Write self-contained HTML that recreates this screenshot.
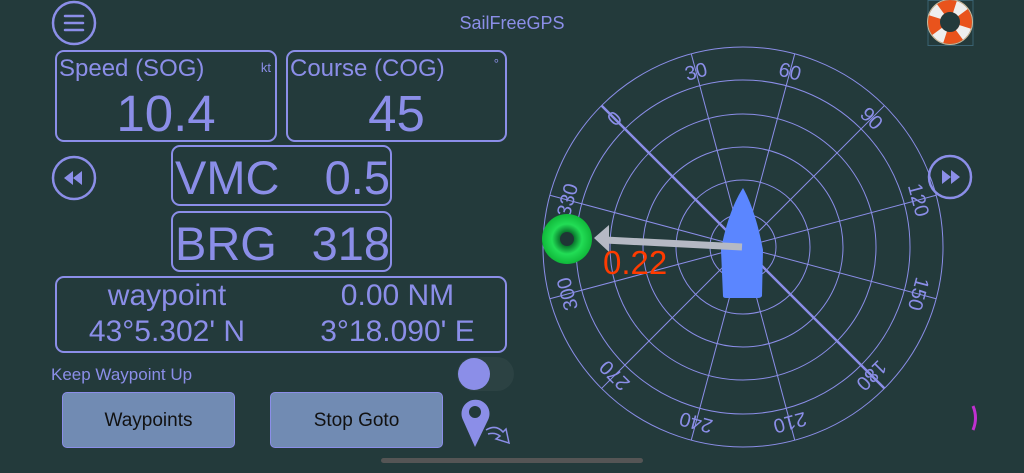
<!DOCTYPE html>
<html><head><meta charset="utf-8"><style>
*{margin:0;padding:0;box-sizing:border-box}
html,body{width:1024px;height:473px;overflow:hidden}
body{background:#233a3b;font-family:"Liberation Sans",sans-serif;color:#8b8ee8;position:relative}
svg{display:block}
.a{position:absolute}
.box{position:absolute;border:2px solid #8b8ee8;border-radius:9px;overflow:hidden}
.lbl{position:absolute;font-size:24px;left:2px;top:3px;white-space:nowrap}
.val{position:absolute;font-size:51px;width:100%;text-align:center;top:32px}
.big{position:absolute;font-size:47px;top:3px;white-space:nowrap}
.btn{position:absolute;background:#718bb3;border:1.5px solid #8b8ee8;border-radius:5px;color:#111;font-size:19px;text-align:center;line-height:55px}
.w{position:absolute;text-align:center;white-space:nowrap;line-height:34px}
</style></head><body>
<svg class="a" style="left:0;top:0" width="1024" height="473">
<circle cx="74" cy="23" r="21" fill="none" stroke="#8b8ee8" stroke-width="2.5"/>
<g stroke="#8b8ee8" stroke-width="2.5" stroke-linecap="round"><line x1="65" y1="16" x2="83" y2="16"/><line x1="65" y1="23" x2="83" y2="23"/><line x1="65" y1="30" x2="83" y2="30"/></g>
<circle cx="74" cy="178" r="21" fill="none" stroke="#8b8ee8" stroke-width="2.5"/>
<path d="M64 178 L73 171 L73 185Z M73 178 L82 171 L82 185Z" fill="#8b8ee8"/>
<circle cx="950" cy="177" r="21" fill="none" stroke="#8b8ee8" stroke-width="2.5"/>
<path d="M960 177 L951 170 L951 184Z M951 177 L942 170 L942 184Z" fill="#8b8ee8"/>
<rect x="928" y="0.5" width="45" height="45" fill="none" stroke="#3a6272" stroke-width="1"/>
<circle cx="950" cy="22" r="16" fill="none" stroke="#e9531c" stroke-width="12"/>
<circle cx="950" cy="22" r="16" fill="none" stroke="#eeeeee" stroke-width="12" stroke-dasharray="10 15.1" stroke-dashoffset="-5"/>
<circle cx="950" cy="22" r="22.5" fill="none" stroke="#c8b89a" stroke-width="1"/>
<g fill="none" stroke="#8b8ee8" stroke-width="1">
<circle cx="743" cy="247" r="33"/><circle cx="743" cy="247" r="67"/><circle cx="743" cy="247" r="100"/><circle cx="743" cy="247" r="133"/><circle cx="743" cy="247" r="167"/><circle cx="743" cy="247" r="200"/>
<g transform="rotate(-45 743 247)">
<line x1="743" y1="247" x2="743" y2="47" stroke-width="2.5"/>
<line x1="743" y1="247" x2="743" y2="47" transform="rotate(30 743 247)"/>
<line x1="743" y1="247" x2="743" y2="47" transform="rotate(60 743 247)"/>
<line x1="743" y1="247" x2="743" y2="47" transform="rotate(90 743 247)"/>
<line x1="743" y1="247" x2="743" y2="47" transform="rotate(120 743 247)"/>
<line x1="743" y1="247" x2="743" y2="47" transform="rotate(150 743 247)"/>
<line x1="743" y1="247" x2="743" y2="47" transform="rotate(180 743 247)" stroke-width="2.5"/>
<line x1="743" y1="247" x2="743" y2="47" transform="rotate(210 743 247)"/>
<line x1="743" y1="247" x2="743" y2="47" transform="rotate(240 743 247)"/>
<line x1="743" y1="247" x2="743" y2="47" transform="rotate(270 743 247)"/>
<line x1="743" y1="247" x2="743" y2="47" transform="rotate(300 743 247)"/>
<line x1="743" y1="247" x2="743" y2="47" transform="rotate(330 743 247)"/>
</g></g>
<g fill="#8b8ee8" font-family="Liberation Sans" font-size="20" text-anchor="middle" transform="rotate(-45 743 247)">
<text x="743" y="72">0</text>
<text x="743" y="72" transform="rotate(30 743 247)">30</text>
<text x="743" y="72" transform="rotate(60 743 247)">60</text>
<text x="743" y="72" transform="rotate(90 743 247)">90</text>
<text x="743" y="72" transform="rotate(120 743 247)">120</text>
<text x="743" y="72" transform="rotate(150 743 247)">150</text>
<text x="743" y="72" transform="rotate(180 743 247)">180</text>
<text x="743" y="72" transform="rotate(210 743 247)">210</text>
<text x="743" y="72" transform="rotate(240 743 247)">240</text>
<text x="743" y="72" transform="rotate(270 743 247)">270</text>
<text x="743" y="72" transform="rotate(300 743 247)">300</text>
<text x="743" y="72" transform="rotate(330 743 247)">330</text>
</g>
<path d="M743 188 C750 200 758 222 763 250 L762 296 Q761 298 758 298 L726 298 Q723 298 723 296 L721 250 C726 222 735 200 743 188Z" fill="#5b86ff"/>
<line x1="742" y1="247" x2="605" y2="240" stroke="#b5b9c4" stroke-width="7"/>
<path d="M594 238 L609 225 L609 252Z" fill="#b5b9c4"/>
<defs><radialGradient id="g" cx="0.5" cy="0.5" r="0.5"><stop offset="0.3" stop-color="#0a7a2e"/><stop offset="0.6" stop-color="#22dd55"/><stop offset="1" stop-color="#10b83a"/></radialGradient></defs>
<circle cx="567" cy="239" r="25" fill="url(#g)"/>
<circle cx="567" cy="239" r="7" fill="#1f3535"/>
<text x="603" y="274" fill="#ff3b00" font-family="Liberation Sans" font-size="33">0.22</text>
<rect x="457" y="357" width="57" height="34" rx="17" fill="#2c4243"/>
<circle cx="474" cy="374" r="16" fill="#8b8ee8"/>
<path d="M475 447 L463 420 A14 14 0 1 1 488 420 Z" fill="#8b8ee8"/>
<circle cx="475" cy="412" r="6" fill="#233a3b"/>
<path d="M486 430 Q496 424 503 432 L506 429 L509 443 L496 439 L500 436 Q495 432 488 434" fill="none" stroke="#8b8ee8" stroke-width="1.5"/>
<rect x="381" y="458" width="262" height="5" rx="2.5" fill="#555"/>
<path d="M973 406 Q978 418 973 430" fill="none" stroke="#c030d0" stroke-width="3"/>
</svg>
<div class="a" style="left:0;width:1024px;text-align:center;top:13px;font-size:18px">SailFreeGPS</div>
<div class="box" style="left:55px;top:50px;width:222px;height:92px"><div class="lbl">Speed (SOG)</div><div class="a" style="right:4px;top:8px;font-size:13px">kt</div><div class="val">10.4</div></div>
<div class="box" style="left:286px;top:50px;width:221px;height:92px"><div class="lbl">Course (COG)</div><div class="a" style="right:6px;top:4px;font-size:13px">°</div><div class="val">45</div></div>
<div class="box" style="left:171px;top:145px;width:221px;height:61px"><div class="big" style="left:2px">VMC</div><div class="big" style="right:0">0.5</div></div>
<div class="box" style="left:171px;top:211px;width:221px;height:61px"><div class="big" style="left:2px">BRG</div><div class="big" style="right:0">318</div></div>
<div class="box" style="left:55px;top:276px;width:452px;height:77px;font-size:30px">
<div class="w" style="left:0;width:220px;top:1px">waypoint</div>
<div class="w" style="left:223px;width:235px;top:1px">0.00 NM</div>
<div class="w" style="left:0;width:220px;top:37px">43°5.302' N</div>
<div class="w" style="left:223px;width:235px;top:37px">3°18.090' E</div>
</div>
<div class="a" style="left:51px;top:365px;font-size:17px">Keep Waypoint Up</div>
<div class="btn" style="left:62px;top:392px;width:173px;height:56px">Waypoints</div>
<div class="btn" style="left:270px;top:392px;width:173px;height:56px">Stop Goto</div>
</body></html>
